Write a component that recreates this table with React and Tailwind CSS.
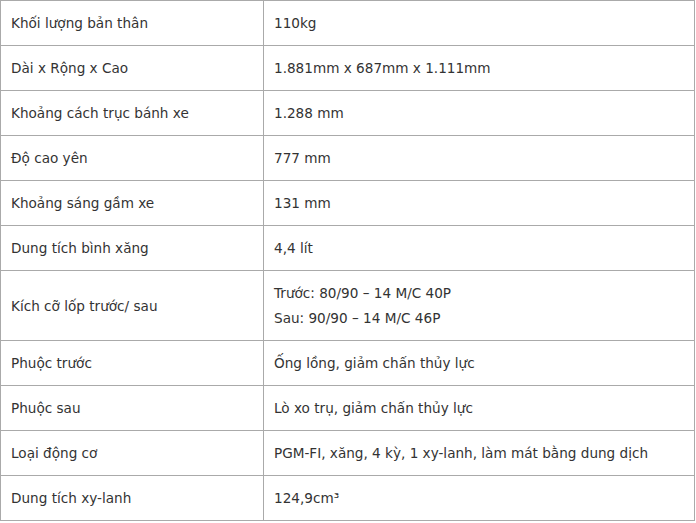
const rows = [
  ["Khối lượng bản thân", ["110kg"]],
  ["Dài x Rộng x Cao", ["1.881mm x 687mm x 1.111mm"]],
  ["Khoảng cách trục bánh xe", ["1.288 mm"]],
  ["Độ cao yên", ["777 mm"]],
  ["Khoảng sáng gầm xe", ["131 mm"]],
  ["Dung tích bình xăng", ["4,4 lít"]],
  ["Kích cỡ lốp trước/ sau", ["Trước: 80/90 – 14 M/C 40P", "Sau: 90/90 – 14 M/C 46P"]],
  ["Phuộc trước", ["Ống lồng, giảm chấn thủy lực"]],
  ["Phuộc sau", ["Lò xo trụ, giảm chấn thủy lực"]],
  ["Loại động cơ", ["PGM-FI, xăng, 4 kỳ, 1 xy-lanh, làm mát bằng dung dịch"]],
  ["Dung tích xy-lanh", ["124,9cm³"]],
];

export default function App() {
  return (
    <div className="w-[696px] h-[523px] bg-white overflow-hidden font-['DejaVu_Sans',sans-serif] text-[13.6px] text-[#333]">
      <table className="w-[695px] border-collapse">
        <tbody>
          {rows.map(([label, values]) => (
            <tr key={label}>
              <td className="w-[263px] border border-[#aaa] px-[10px] pt-[10px] pb-[9px] leading-[25px] align-middle">
                {label}
              </td>
              <td className="border border-[#aaa] px-[10px] pt-[10px] pb-[9px] leading-[25px] align-middle">
                {values.map((v) => (
                  <div key={v}>{v}</div>
                ))}
              </td>
            </tr>
          ))}
        </tbody>
      </table>
    </div>
  );
}
